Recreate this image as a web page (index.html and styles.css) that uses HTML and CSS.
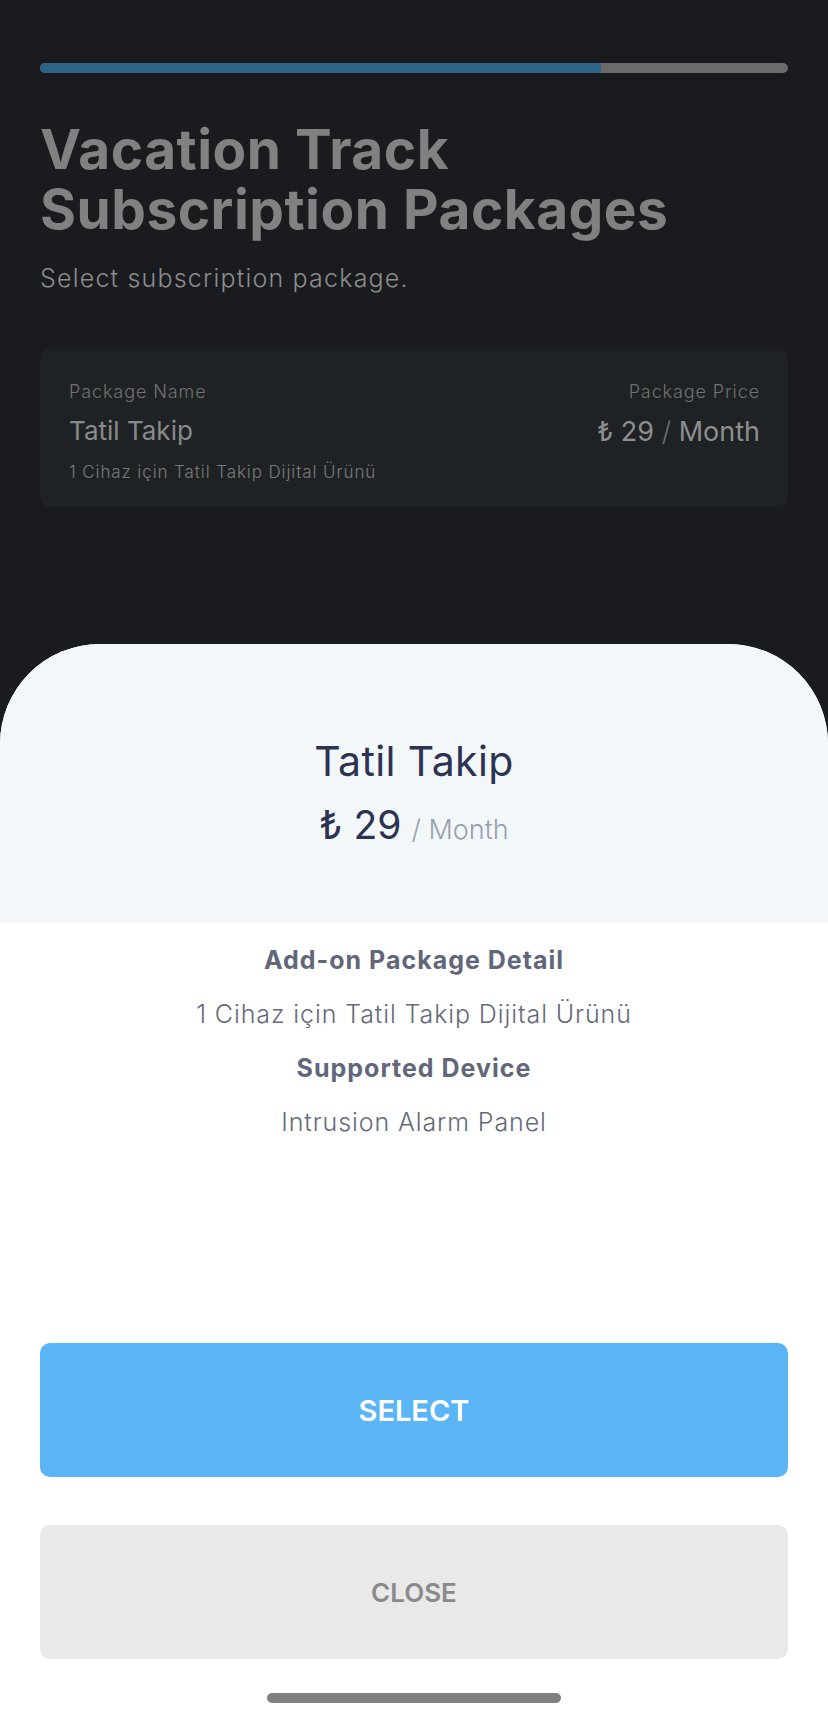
FILE: index.html
```html
<!DOCTYPE html>
<html lang="en">
<head>
<meta charset="utf-8">
<title>Vacation Track Subscription Packages</title>
<link rel="stylesheet" href="styles.css">
</head>
<body>
<div class="screen">
  <div class="page">
    <div class="progress"><div class="progress-fill" style="width: 75%"></div></div>
    <h1 class="title">Vacation Track<br>Subscription Packages</h1>
    <p class="subtitle">Select subscription package.</p>
    <div class="card">
      <div class="card-col">
        <span class="card-label">Package Name</span>
        <span class="card-name">Tatil Takip</span>
        <span class="card-desc">1 Cihaz için Tatil Takip Dijital Ürünü</span>
      </div>
      <div class="card-col card-col-right">
        <span class="card-label">Package Price</span>
        <span class="card-price">₺ 29 <span class="slash">/</span> Month</span>
      </div>
    </div>
  </div>
  <div class="sheet">
    <div class="sheet-head">
      <div class="sheet-name">Tatil Takip</div>
      <div class="sheet-price"><span class="amount">₺ 29</span><span class="period">/ Month</span></div>
    </div>
    <div class="details">
      <p class="detail-title">Add-on Package Detail</p>
      <p class="detail-text">1 Cihaz için Tatil Takip Dijital Ürünü</p>
      <p class="detail-title">Supported Device</p>
      <p class="detail-text">Intrusion Alarm Panel</p>
    </div>
    <div class="actions">
      <button class="btn btn-select">SELECT</button>
      <button class="btn btn-close">CLOSE</button>
    </div>
    <div class="home-indicator"></div>
  </div>
</div>
</body>
</html>
```

FILE: styles.css
```css
* { box-sizing: border-box; }
html, body { margin: 0; padding: 0; }
body {
  background: #1a1b1f;
  font-family: "Inter", "Lato", sans-serif;
}
.screen {
  width: 828px;
  height: 1719px;
  display: flex;
  flex-direction: column;
  overflow: hidden;
}
.page {
  padding: 63px 40px 0;
}
.progress {
  height: 10px;
  border-radius: 5px;
  background: #6b6b6b;
  overflow: hidden;
}
.progress-fill {
  height: 100%;
  background: #2e6388;
}
.title {
  margin: 46px 0 0;
  font-size: 55px;
  line-height: 60px;
  font-weight: 700;
  color: #818181;
  letter-spacing: 0.5px;
}
.subtitle {
  margin: 24px 0 0;
  font-size: 25px;
  line-height: 30px;
  font-weight: 300;
  color: #8c8c8c;
  letter-spacing: 1.2px;
}
.card {
  margin-top: 55px;
  background: #1f2225;
  border-radius: 10px;
  padding: 33px 28px 24px 29px;
  display: flex;
  justify-content: space-between;
}
.card-col {
  display: flex;
  flex-direction: column;
}
.card-col-right { align-items: flex-end; }
.card-label {
  font-size: 18px;
  line-height: 22px;
  font-weight: 300;
  color: #717171;
  letter-spacing: 0.9px;
}
.card-name {
  margin-top: 12px;
  font-size: 26px;
  line-height: 32px;
  color: #8a8a8a;
}
.card-desc {
  margin-top: 14px;
  font-size: 17px;
  line-height: 22px;
  font-weight: 300;
  color: #7a7a7a;
  letter-spacing: 0.9px;
}
.card-price {
  margin-top: 12px;
  font-size: 27px;
  line-height: 34px;
  color: #8e8e8e;
}
.card-price .slash { font-weight: 300; color: #6e6e6e; }
.sheet {
  margin-top: auto;
  height: 1075px;
  background: #ffffff;
  border-radius: 100px 100px 0 0;
  overflow: hidden;
  display: flex;
  flex-direction: column;
}
.sheet-head {
  background: #f2f7fa;
  height: 279px;
  padding-top: 92px;
  text-align: center;
}
.sheet-name {
  font-size: 41px;
  line-height: 50px;
  color: #2e3252;
  letter-spacing: 0.4px;
}
.sheet-price {
  margin-top: 15px;
  line-height: 48px;
  display: flex;
  justify-content: center;
  align-items: baseline;
  gap: 10px;
}
.amount {
  font-size: 39px;
  color: #2e3252;
}
.period {
  font-size: 27px;
  font-weight: 300;
  color: #9aa0ae;
}
.details {
  padding-top: 10px;
  text-align: center;
}
.details p {
  margin: 0;
  font-size: 25px;
  line-height: 54px;
}
.detail-title {
  font-weight: 700;
  color: #62667a;
  letter-spacing: 1px;
}
.detail-text {
  font-weight: 300;
  color: #666a7a;
  letter-spacing: 0.9px;
}
.actions {
  margin-top: auto;
  padding: 0 40px;
  display: flex;
  flex-direction: column;
  gap: 48px;
}
.btn {
  height: 134px;
  border: none;
  border-radius: 10px;
  font-family: inherit;
  font-weight: 600;
}
.btn-select {
  background: #5bb5f5;
  color: #ffffff;
  font-size: 29px;
}
.btn-close {
  background: #e9e9e9;
  color: #8a8a8a;
  font-size: 26px;
}
.home-indicator {
  margin: 34px auto 16px;
  width: 294px;
  height: 10px;
  border-radius: 5px;
  background: #808080;
}
```
